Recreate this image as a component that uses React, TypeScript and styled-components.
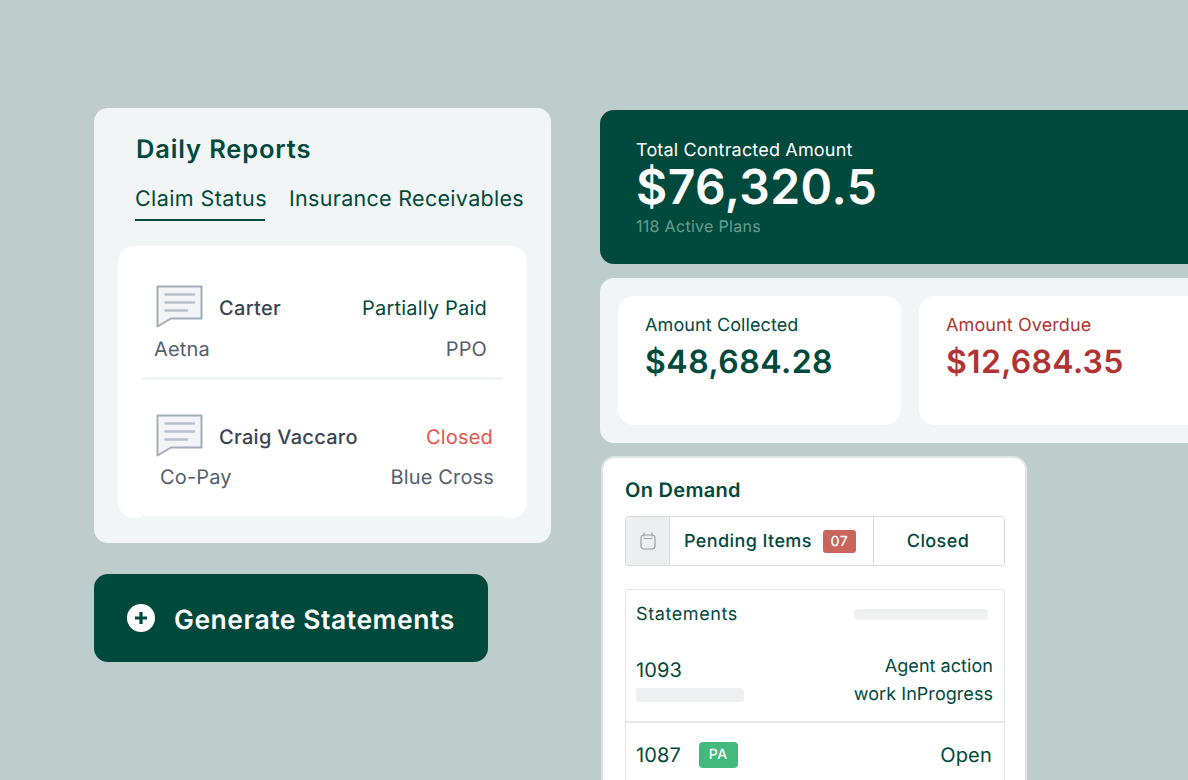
import React from "react";
import styled, { createGlobalStyle } from "styled-components";

const Global = createGlobalStyle`
  html, body { margin: 0; padding: 0; background: #bdcdcc; }
  body { font-family: Inter, "Noto Sans", sans-serif; text-rendering: geometricPrecision; }
  button { text-rendering: geometricPrecision; }
  * { box-sizing: border-box; }
`;

const GREEN = "#00493d";
const SOFT = "#f1f5f6";

const Page = styled.div`
  width: 1188px;
  height: 780px;
  overflow: hidden;
  background: #bdcdcc;
  display: flex;
  align-items: flex-start;
  padding: 108px 0 0 94px;
  gap: 49px;
`;
const LeftCol = styled.div`
  width: 457px;
  flex: none;
  display: flex;
  flex-direction: column;
  align-items: flex-start;
  gap: 31px;
`;
const ReportCard = styled.section`
  width: 457px;
  height: 435px;
  background: ${SOFT};
  border-radius: 14px;
  padding: 24px 24px 25px;
  display: flex;
  flex-direction: column;
`;
const Title = styled.h2`
  margin: 1px 0 0 18px;
  height: 34px;
  font-size: 25.5px;
  line-height: 34px;
  font-weight: 600;
  letter-spacing: 0.85px;
  color: ${GREEN};
`;
const Tabs = styled.div`
  display: flex;
  margin: 18px 0 0 17px;
  height: 36px;
  gap: 24px;
`;
const Tab = styled.div<{ $active?: boolean }>`
  width: ${(p) => (p.$active ? "130px" : "auto")};
  font-size: 21.5px;
  line-height: 29px;
  letter-spacing: ${(p) => (p.$active ? "0.4px" : "0.3px")};
  height: 36px;
  white-space: nowrap;
  color: ${GREEN};
  border-bottom: 2px solid ${(p) => (p.$active ? GREEN : "transparent")};
`;
const Panel = styled.div`
  margin-top: 25px;
  height: 272px;
  background: #fff;
  border-radius: 16px;
  padding: 0 24px;
`;
const Row = styled.div`
  height: 134px;
  padding: 46px 0 0;
  border-bottom: 3px solid #f0f3f4;
  & + & {
    height: 138px;
    padding-top: 41px;
    border-bottom: 2px solid ${SOFT};
  }
`;
const RowTop = styled.div<{ $pad: number }>`
  display: flex;
  align-items: center;
  height: 32px;
  padding-right: ${(p) => p.$pad}px;
`;
const RowIcon = styled.svg`
  width: 48px;
  height: 44px;
  margin: -2px 0 0 14px;
  flex: none;
`;
const Name = styled.span`
  margin-left: 15px;
  font-size: 20px;
  font-weight: 500;
  letter-spacing: 0.3px;
  color: #3b4452;
  flex: 1;
`;
const Status = styled.span<{ $red?: boolean }>`
  font-size: 20px;
  letter-spacing: 0.2px;
  color: ${(p) => (p.$red ? "#e5564c" : GREEN)};
`;
const RowBottom = styled.div<{ $left: number; $right: number; $drop: number }>`
  display: flex;
  justify-content: space-between;
  margin-top: ${(p) => p.$drop}px;
  padding: 0 ${(p) => p.$right}px 0 ${(p) => p.$left}px;
  font-size: 20px;
  line-height: 28px;
  letter-spacing: 0.15px;
  color: #556070;
`;
const GenerateButton = styled.button`
  width: 394px;
  height: 88px;
  border: 0;
  border-radius: 14px;
  background: ${GREEN};
  color: #fff;
  display: flex;
  align-items: center;
  padding: 0 0 0 33px;
  gap: 19px;
  font-family: inherit;
  font-size: 26.5px;
  font-weight: 600;
  letter-spacing: 0.54px;
`;
const GenerateLabel = styled.span`
  margin-top: 3px;
`;
const RightCol = styled.div`
  width: 640px;
  flex: none;
  padding-top: 2px;
  display: flex;
  flex-direction: column;
`;
const HeroCard = styled.section`
  height: 154px;
  background: ${GREEN};
  border-radius: 14px;
  padding: 29px 36px;
  color: #fff;
`;
const HeroLabel = styled.div`
  font-size: 18px;
  line-height: 24px;
  letter-spacing: 0.17px;
`;
const HeroValue = styled.div`
  font-size: 48px;
  line-height: 50px;
  font-weight: 600;
  letter-spacing: 0.45px;
  margin-top: -1px;
`;
const HeroSub = styled.div`
  font-size: 16px;
  line-height: 22px;
  letter-spacing: 0.3px;
  color: #669f92;
  margin-top: 3px;
`;
const AmountsCard = styled.section`
  margin-top: 14px;
  height: 165px;
  background: ${SOFT};
  border-radius: 14px;
  padding: 18px;
  display: flex;
  gap: 18px;
`;
const AmountCard = styled.div<{ $red?: boolean }>`
  width: 283px;
  flex: none;
  height: 129px;
  border-radius: 16px;
  background: #fff;
  padding: 18px 27px;
  color: ${(p) => (p.$red ? "#b03434" : GREEN)};
`;
const AmountLabel = styled.div`
  font-size: 18px;
  line-height: 24px;
  letter-spacing: 0.1px;
`;
const AmountValue = styled.div<{ $spacing: number }>`
  font-size: 32px;
  line-height: 40px;
  font-weight: 600;
  letter-spacing: ${(p) => p.$spacing}px;
  margin-top: 4px;
`;
const DemandCard = styled.section`
  margin: 13px 0 0 1px;
  width: 426px;
  height: 340px;
  background: #fff;
  border: 2px solid #dfe6e6;
  border-radius: 14px;
  padding: 0 20px 0 22px;
  color: ${GREEN};
`;
const DemandTitle = styled.h3`
  margin: 19px 0 0;
  font-size: 20px;
  line-height: 26px;
  font-weight: 600;
  letter-spacing: 0.3px;
`;
const Toolbar = styled.div`
  display: flex;
  height: 50px;
  margin-top: 13px;
  border: 1px solid #d9dcde;
  border-radius: 3px;
  overflow: hidden;
`;
const CalCell = styled.div`
  width: 44px;
  background: #eceeef;
  border-right: 1px solid #d9dcde;
  display: flex;
  align-items: center;
  justify-content: center;
`;
const PendingCell = styled.div`
  width: 204px;
  border-right: 1px solid #d9dcde;
  display: flex;
  align-items: center;
  padding-left: 14px;
  font-size: 18px;
  font-weight: 500;
  letter-spacing: 0.4px;
`;
const Badge = styled.span`
  margin-left: 11px;
  width: 33px;
  height: 23px;
  background: #c9655a;
  border-radius: 3px;
  color: #fff;
  font-size: 14px;
  letter-spacing: 0.6px;
  display: flex;
  align-items: center;
  justify-content: center;
`;
const ClosedCell = styled.div`
  flex: 1;
  display: flex;
  align-items: center;
  justify-content: center;
  padding-right: 2px;
  font-size: 18px;
  font-weight: 500;
  letter-spacing: 0.4px;
`;
const Statements = styled.div`
  margin-top: 23px;
  border: 1px solid #e2e5e6;
  border-radius: 3px 3px 0 0;
  height: 240px;
`;
const StatementHead = styled.div`
  display: flex;
  align-items: center;
  justify-content: space-between;
  height: 48px;
  padding: 0 16px 0 10px;
  font-size: 18px;
  letter-spacing: 0.6px;
`;
const Skeleton = styled.div<{ $w: number; $h: number }>`
  width: ${(p) => p.$w}px;
  height: ${(p) => p.$h}px;
  background: #eff0f1;
  border-radius: 3px;
`;
const FirstRow = styled.div`
  height: 85px;
  padding: 15px 11px 0 10px;
  display: flex;
  justify-content: space-between;
  border-bottom: 2px solid #e6e8e9;
`;
const IdBlock = styled.div`
  padding-top: 4px;
  display: flex;
  flex-direction: column;
  gap: 5px;
`;
const IdText = styled.span`
  font-size: 20px;
  line-height: 26px;
  letter-spacing: 0.1px;
`;
const AgentText = styled.div`
  font-size: 18px;
  line-height: 28px;
  letter-spacing: 0.05px;
  text-align: right;
`;
const SecondRow = styled.div`
  display: flex;
  align-items: center;
  height: 63px;
  padding: 0 12px 0 10px;
`;
const Pill = styled.span`
  margin-left: 18px;
  width: 39px;
  height: 26px;
  border-radius: 4px;
  background: #43b97c;
  color: #fff;
  font-size: 14px;
  font-weight: 500;
  letter-spacing: 0.6px;
  display: flex;
  align-items: center;
  justify-content: center;
`;
const OpenText = styled.span`
  margin-left: auto;
  font-size: 20px;
  letter-spacing: 0.2px;
`;

const ChatIcon = () => (
  <RowIcon viewBox="0 0 48 44" fill="none">
    <path
      d="M1.5 1.5H45.5V33.5H15L1.5 41.5Z"
      fill="#f3f4f7"
      stroke="#a3acb9"
      strokeWidth="2"
      strokeLinejoin="round"
    />
    <path
      d="M9.5 9.5H38M9.5 17.5H38M9.5 25.5H31"
      stroke="#b8c0cc"
      strokeWidth="2.6"
      strokeLinecap="round"
    />
  </RowIcon>
);

const PlusIcon = () => (
  <svg width="28" height="28" viewBox="0 0 28 28" style={{ flex: "none" }}>
    <circle cx="14" cy="14" r="14" fill="#fff" />
    <path d="M14 8V20M8 14H20" stroke={GREEN} strokeWidth="3.2" />
  </svg>
);

const CalIcon = () => (
  <svg width="16" height="18" viewBox="0 0 16 18" fill="none" stroke="#9aa0a6" strokeWidth="1.2">
    <rect x="1" y="3" width="14" height="14" rx="3" />
    <path d="M4 1V4M12 1V4M4 6.5H12" strokeLinecap="round" />
  </svg>
);

export default function App() {
  return (
    <Page>
      <Global />
      <LeftCol>
        <ReportCard>
          <Title>Daily Reports</Title>
          <Tabs>
            <Tab $active>Claim Status</Tab>
            <Tab>Insurance Receivables</Tab>
          </Tabs>
          <Panel>
            <Row>
              <RowTop $pad={16}>
                <ChatIcon />
                <Name>Carter</Name>
                <Status>Partially Paid</Status>
              </RowTop>
              <RowBottom $left={12} $right={16} $drop={11}>
                <span>Aetna</span>
                <span>PPO</span>
              </RowBottom>
            </Row>
            <Row>
              <RowTop $pad={10}>
                <ChatIcon />
                <Name>Craig Vaccaro</Name>
                <Status $red>Closed</Status>
              </RowTop>
              <RowBottom $left={18} $right={9} $drop={10}>
                <span>Co-Pay</span>
                <span>Blue Cross</span>
              </RowBottom>
            </Row>
          </Panel>
        </ReportCard>
        <GenerateButton>
          <PlusIcon />
          <GenerateLabel>Generate Statements</GenerateLabel>
        </GenerateButton>
      </LeftCol>
      <RightCol>
        <HeroCard>
          <HeroLabel>Total Contracted Amount</HeroLabel>
          <HeroValue>$76,320.5</HeroValue>
          <HeroSub>118 Active Plans</HeroSub>
        </HeroCard>
        <AmountsCard>
          <AmountCard>
            <AmountLabel>Amount Collected</AmountLabel>
            <AmountValue $spacing={0.5}>$48,684.28</AmountValue>
          </AmountCard>
          <AmountCard $red>
            <AmountLabel>Amount Overdue</AmountLabel>
            <AmountValue $spacing={0.3}>$12,684.35</AmountValue>
          </AmountCard>
        </AmountsCard>
        <DemandCard>
          <DemandTitle>On Demand</DemandTitle>
          <Toolbar>
            <CalCell>
              <CalIcon />
            </CalCell>
            <PendingCell>
              Pending Items
              <Badge>07</Badge>
            </PendingCell>
            <ClosedCell>Closed</ClosedCell>
          </Toolbar>
          <Statements>
            <StatementHead>
              Statements
              <Skeleton $w={134} $h={11} />
            </StatementHead>
            <FirstRow>
              <IdBlock>
                <IdText>1093</IdText>
                <Skeleton $w={108} $h={14} />
              </IdBlock>
              <AgentText>
                Agent action
                <br />
                work InProgress
              </AgentText>
            </FirstRow>
            <SecondRow>
              <IdText>1087</IdText>
              <Pill>PA</Pill>
              <OpenText>Open</OpenText>
            </SecondRow>
          </Statements>
        </DemandCard>
      </RightCol>
    </Page>
  );
}
